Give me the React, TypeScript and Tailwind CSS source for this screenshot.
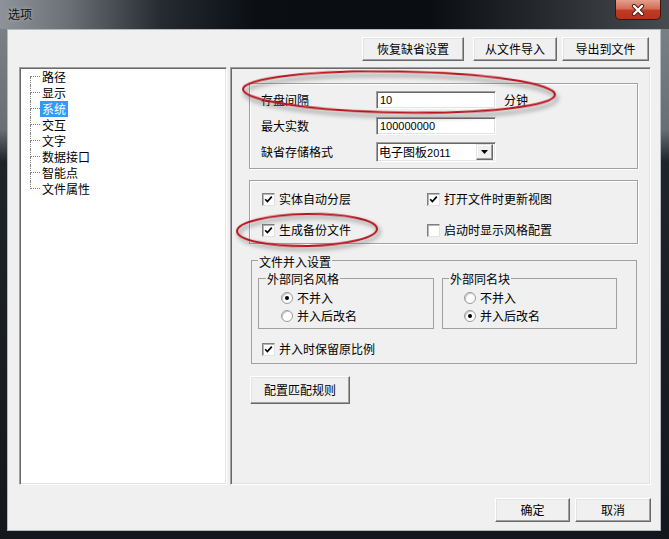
import React from "react"

const CJK = "font-['Noto_Sans_CJK_SC',sans-serif]"
const NUM = "font-['Liberation_Sans','Noto_Sans_CJK_SC',sans-serif] text-[11px]"

// classic raised 3D button
function WinButton({ children, className = "" }: { children: React.ReactNode; className?: string }) {
  return (
    <div
      className={`flex items-center justify-center bg-[#f0f0f0] border border-t-white border-l-white border-r-[#696969] border-b-[#696969] shadow-[inset_-1px_-1px_0_#a0a0a0,inset_1px_1px_0_#e3e3e3] text-[12px] leading-none text-black ${className}`}
    >
      {children}
    </div>
  )
}

const sunken =
  "border border-t-[#a0a0a0] border-l-[#a0a0a0] border-r-white border-b-white shadow-[inset_1px_1px_0_#696969,inset_-1px_-1px_0_#e3e3e3]"

function TextBox({ value }: { value: string }) {
  return (
    <div className={`w-[120px] h-[18px] bg-white ${sunken} pl-[3px] flex items-center ${NUM} text-black`}>
      {value}
    </div>
  )
}

function Combo() {
  return (
    <div className={`w-[120px] h-[20px] bg-white ${sunken} pl-[2px] pr-[2px] flex items-center`}>
      <span className="text-[12px] leading-none text-black">
        电子图板<span className={NUM}>2011</span>
      </span>
      <div className="ml-auto w-[17px] h-[16px] flex items-center justify-center bg-[#f0f0f0] border border-t-[#e3e3e3] border-l-[#e3e3e3] border-r-[#696969] border-b-[#696969] shadow-[inset_-1px_-1px_0_#a0a0a0,inset_1px_1px_0_#fff]">
        <svg width="7" height="4" viewBox="0 0 7 4">
          <path d="M0 0 H7 L3.5 4 Z" fill="#000" />
        </svg>
      </div>
    </div>
  )
}

function Check({ checked, label, className = "" }: { checked?: boolean; label: string; className?: string }) {
  return (
    <div className={`flex items-center h-[20px] ${className}`}>
      <div className="w-[13px] h-[13px] bg-white border border-t-[#808080] border-l-[#808080] border-r-[#e3e3e3] border-b-[#e3e3e3] shadow-[inset_1px_1px_0_#b5b5b5] flex items-center justify-center">
        {checked && (
          <svg width="9" height="9" viewBox="0 0 9 9">
            <path d="M1.2 4.2 L3.4 6.6 L7.8 1.6" fill="none" stroke="#000" strokeWidth="1.7" />
          </svg>
        )}
      </div>
      <span className="ml-[4px] text-[12px] leading-none text-black">{label}</span>
    </div>
  )
}

function Radio({ checked, label }: { checked?: boolean; label: string }) {
  return (
    <div className="flex items-center h-[18px]">
      <div className="w-[12px] h-[12px] rounded-full bg-white border border-[#9a9a9a] shadow-[inset_1px_1px_0_#c8c8c8] flex items-center justify-center">
        {checked && <div className="w-[4px] h-[4px] rounded-full bg-black" />}
      </div>
      <span className="ml-[4px] text-[12px] leading-none text-black">{label}</span>
    </div>
  )
}

function FieldRow({ label, children }: { label: string; children: React.ReactNode }) {
  return (
    <div className="flex items-center h-[26px]">
      <span className="w-[115px] text-[12px] leading-none text-black">{label}</span>
      {children}
    </div>
  )
}

const treeItems = ["路径", "显示", "系统", "交互", "文字", "数据接口", "智能点", "文件属性"]

export default function App() {
  return (
    <div
      className={`relative w-[669px] h-[539px] overflow-hidden flex flex-col ${CJK} bg-[linear-gradient(180deg,#7f848a_0%,#6a6f75_24%,#1f2429_30%,#14181c_100%)]`}
    >
      {/* title bar */}
      <div className="h-[29px] flex items-start bg-[linear-gradient(90deg,#8e9399_0%,#6c7177_10%,#262b31_24%,#0b0f14_38%,#0a0d12_64%,#24282d_80%,#474b50_100%)]">
        <span className="ml-[8px] mt-[6px] text-[12px] leading-[16px] text-[#101010] [text-shadow:0_0_4px_rgba(255,255,255,0.5)]">
          选项
        </span>
        <div className="ml-auto mr-[8px] w-[46px] h-[20px] rounded-b-[5px] border border-t-0 border-[#3d1510] bg-[linear-gradient(180deg,#e3a08f_0%,#d46d56_45%,#c23b22_55%,#b5321c_100%)] flex items-center justify-center">
          <svg width="14" height="12" viewBox="0 0 14 12">
            <path d="M3 2 L11 10 M11 2 L3 10" stroke="#4a1a12" strokeWidth="4.2" strokeLinecap="round" />
            <path d="M3 2 L11 10 M11 2 L3 10" stroke="#fff" strokeWidth="2.4" strokeLinecap="round" />
          </svg>
        </div>
      </div>

      {/* client area */}
      <div className="ml-[7px] w-[654px] h-[502px] bg-[#f0f0f0] border border-[#b4b9be] flex flex-col">
        {/* top buttons */}
        <div className="mt-[7px] pr-[11px] flex justify-end">
          <WinButton className="w-[102px] h-[24px]">恢复缺省设置</WinButton>
          <WinButton className="ml-[9px] w-[84px] h-[24px]">从文件导入</WinButton>
          <WinButton className="ml-[5px] w-[87px] h-[24px]">导出到文件</WinButton>
        </div>

        {/* panels */}
        <div className="mt-[6px] ml-[11px] flex gap-[3px]">
          {/* tree */}
          <div className={`w-[208px] h-[418px] bg-white ${sunken} p-px`}>
            <div className="pl-[9px]">
              {treeItems.map((t, i) => (
                <div key={t} className="flex h-[16px]">
                  <div className="w-[10px] h-full flex flex-col">
                    <div
                      className={`h-[8px] border-b border-dotted border-[#808080] ${i > 0 ? "border-l" : ""}`}
                    />
                    <div
                      className={`flex-1 border-dotted border-[#808080] ${i < treeItems.length - 1 ? "border-l" : ""}`}
                    />
                  </div>
                  <span
                    className={`px-[2px] h-[16px] text-[12px] leading-[16px] ${i === 2 ? "bg-[#3399ff] text-white" : "text-black"}`}
                  >
                    {t}
                  </span>
                </div>
              ))}
            </div>
          </div>

          {/* settings */}
          <div className={`w-[421px] h-[418px] bg-[#f0f0f0] ${sunken} p-px flex flex-col`}>
            <div className="ml-[17px] mt-[14px] w-[389px] h-[86px] border border-[#a0a0a0] shadow-[1px_1px_0_#fff,inset_1px_1px_0_#fff] pl-[11px] pt-[3px] flex flex-col">
              <FieldRow label="存盘间隔">
                <TextBox value="10" />
                <span className="ml-[8px] text-[12px] leading-none text-black">分钟</span>
              </FieldRow>
              <FieldRow label="最大实数">
                <TextBox value="100000000" />
              </FieldRow>
              <FieldRow label="缺省存储格式">
                <Combo />
              </FieldRow>
            </div>

            <div className="ml-[17px] mt-[11px] w-[389px] h-[64px] border border-[#a0a0a0] shadow-[1px_1px_0_#fff,inset_1px_1px_0_#fff] pl-[12px] pt-[8px] flex flex-col gap-[11px]">
              <div className="flex">
                <Check checked label="实体自动分层" className="w-[165px]" />
                <Check checked label="打开文件时更新视图" />
              </div>
              <div className="flex">
                <Check checked label="生成备份文件" className="w-[165px]" />
                <Check label="启动时显示风格配置" />
              </div>
            </div>

            <fieldset className="ml-[19px] mt-[7px] w-[386px] h-[113px] border border-[#a0a0a0] pt-px">
              <legend className="ml-[6px] px-[1px] pt-[4px] text-[12px] leading-[14px] text-black">文件并入设置</legend>
              <div className="pl-[6px] flex gap-[8px]">
                <fieldset className="w-[176px] h-[59px] border border-[#a0a0a0]">
                  <legend className="ml-[7px] px-[1px] pt-[2px] text-[12px] leading-[14px] text-black">外部同名风格</legend>
                  <div className="pl-[22px] pt-[3px]">
                    <Radio checked label="不并入" />
                    <Radio label="并入后改名" />
                  </div>
                </fieldset>
                <fieldset className="w-[175px] h-[59px] border border-[#a0a0a0]">
                  <legend className="ml-[6px] px-[1px] pt-[2px] text-[12px] leading-[14px] text-black">外部同名块</legend>
                  <div className="pl-[21px] pt-[3px]">
                    <Radio label="不并入" />
                    <Radio checked label="并入后改名" />
                  </div>
                </fieldset>
              </div>
              <Check checked label="并入时保留原比例" className="ml-[10px] mt-[10px]" />
            </fieldset>

            <WinButton className="ml-[18px] mt-[12px] w-[100px] h-[28px]">配置匹配规则</WinButton>
          </div>
        </div>

        {/* bottom buttons */}
        <div className="mt-[13px] pr-[9px] flex justify-end gap-[5px]">
          <WinButton className="w-[75px] h-[24px]">确定</WinButton>
          <WinButton className="w-[76px] h-[24px]">取消</WinButton>
        </div>
      </div>

      {/* hand-drawn annotation ellipses */}
      <svg className="absolute left-0 top-0 pointer-events-none" width={669} height={539}>
        <defs>
          <filter id="blur" x="-20%" y="-60%" width="140%" height="220%">
            <feGaussianBlur stdDeviation="2" />
          </filter>
        </defs>
        <g filter="url(#blur)" opacity="0.5">
          <ellipse cx={401} cy={96} rx={156} ry={20.5} fill="none" stroke="#555" strokeWidth={3} transform="rotate(1 401 96)" />
          <ellipse cx={309} cy={233} rx={70} ry={16} fill="none" stroke="#555" strokeWidth={3} transform="rotate(-1 309 233)" />
        </g>
        <ellipse cx={399} cy={92} rx={156} ry={20.5} fill="none" stroke="#b8151c" strokeWidth={2} transform="rotate(1 399 92)" />
        <ellipse cx={307} cy={230} rx={70} ry={16} fill="none" stroke="#b8151c" strokeWidth={2} transform="rotate(-1 307 230)" />
      </svg>
    </div>
  )
}
